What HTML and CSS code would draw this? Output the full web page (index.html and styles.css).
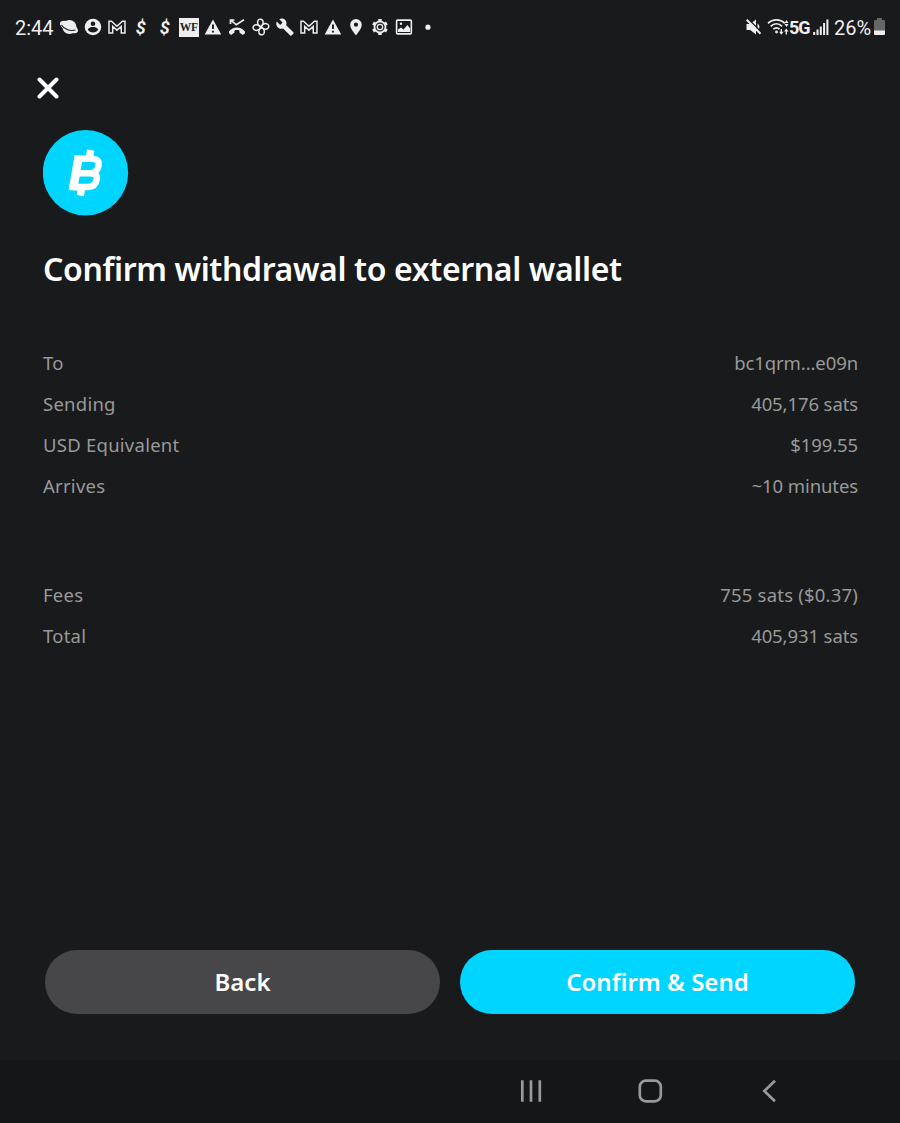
FILE: index.html
```html
<!DOCTYPE html>
<html lang="en">
<head>
    <meta charset="UTF-8">
    <meta name="viewport" content="width=device-width, initial-scale=1.0">
    <title>Confirm withdrawal</title>
    <link rel="stylesheet" href="styles.css">
</head>
<body>
    <div class="status-bar">
        <span class="clock">2:44</span>
        <div class="notifications">
            <svg class="icon" viewBox="0 0 24 24">
                <ellipse cx="12" cy="12" rx="10" ry="4.600" transform="rotate(28 12 12)"/>
                <circle cx="12.500" cy="12" r="7"/>
                <path class="cut" d="M4.500 10c2.500 4 8 6.500 14 5" stroke-width="1.100"/>
            </svg>
            <svg class="icon" viewBox="0 0 24 24">
                <circle cx="12" cy="12" r="8.300"/>
                <circle class="hole" cx="12" cy="8.700" r="2.300"/>
                <path class="hole" d="M6.800 14.500c1.200-2 3.200-2.600 5.200-2.600s4 .6 5.200 2.600c-1.200 2.200-3 3-5.200 3s-4-.8-5.200-3z"/>
            </svg>
            <svg class="icon" viewBox="0 0 24 24">
                <path class="line" d="M4 18V6.300h2.500l5.500 5 5.500-5H20V18h-3.700v-6.500l-4.300 3.700-4.300-3.700V18z" stroke-width="1.500"/>
            </svg>
            <span class="dollar">$</span>
            <span class="dollar">$</span>
            <span class="bank"><b>WF</b></span>
            <svg class="icon" viewBox="0 0 24 24">
                <path d="M12 4.500L20.300 19.500H3.700z"/>
                <path class="cut" d="M12 9.500v4.500M12 15.700v1.900" stroke-width="1.900"/>
            </svg>
            <svg class="icon" viewBox="0 0 24 24">
                <path class="line" d="M5.500 9V5h4M5.800 5.200l5.500 4.600L19 4.800" stroke-width="1.700"/>
                <path d="M4 16.500c4-5.300 12-5.300 16 0v1.700l-2.200 1.900-3.300-2.500v-2.200c-1.600-.6-3.400-.6-5 0v2.200l-3.300 2.500L4 18.200z"/>
            </svg>
            <svg class="icon" viewBox="0 0 24 24">
                <g class="line" stroke-width="1.500">
                    <path d="M12 11.800C9 10.500 8.300 8.500 8.700 6.500c.3-2.200 2.500-2.800 4-2 2.200 1.200 2 4.300-.7 7.300z"/>
                    <path d="M12 11.800C9 10.500 8.300 8.500 8.700 6.500c.3-2.200 2.500-2.800 4-2 2.200 1.200 2 4.300-.7 7.300z" transform="rotate(90 12 12)"/>
                    <path d="M12 11.800C9 10.500 8.300 8.500 8.700 6.500c.3-2.200 2.500-2.800 4-2 2.200 1.200 2 4.300-.7 7.300z" transform="rotate(180 12 12)"/>
                    <path d="M12 11.800C9 10.500 8.300 8.500 8.700 6.500c.3-2.200 2.500-2.800 4-2 2.200 1.200 2 4.300-.7 7.300z" transform="rotate(270 12 12)"/>
                </g>
            </svg>
            <svg class="icon" viewBox="0 0 24 24">
                <path d="M20.400 17.300l-7.200-7.100c.7-1.900.3-3.900-1-5.200-1.700-1.600-4-1.900-5.900-.8l3.300 3.300-2.400 2.400-3.400-3.300c-1 1.900-.6 4.400 1 5.900 1.400 1.400 3.500 1.700 5.300 1l7.200 7.100c.4.400.9.400 1.200 0l1.900-1.800c.4-.4.4-1.100 0-1.500z"/>
            </svg>
            <svg class="icon" viewBox="0 0 24 24">
                <path class="line" d="M4 18V6.300h2.500l5.500 5 5.500-5H20V18h-3.700v-6.500l-4.300 3.700-4.300-3.700V18z" stroke-width="1.500"/>
            </svg>
            <svg class="icon" viewBox="0 0 24 24">
                <path d="M12 4.500L20.300 19.500H3.700z"/>
                <path class="cut" d="M12 9.500v4.500M12 15.700v1.900" stroke-width="1.900"/>
            </svg>
            <svg class="icon" viewBox="0 0 24 24">
                <path d="M12 4a5.800 5.800 0 0 0-5.800 5.800C6.200 14 12 20.300 12 20.300s5.800-6.300 5.800-10.500A5.800 5.800 0 0 0 12 4z"/>
                <circle class="hole" cx="12" cy="9.700" r="2.100"/>
            </svg>
            <svg class="icon" viewBox="0 0 24 24">
                <circle class="line" cx="12" cy="12" r="5.500" stroke-width="1.800"/>
                <circle class="line" cx="12" cy="12" r="2.700" stroke-width="1.300"/>
                <path class="line" d="M12 4v2.500M12 17.500V20M5.100 8l2 1.200M16.900 14.800l2 1.200M5.100 16l2-1.200M16.900 9.200l2-1.200" stroke-width="3.400"/>
            </svg>
            <svg class="icon" viewBox="0 0 24 24">
                <rect class="line" x="4.600" y="5.100" width="14.800" height="13.800" rx="1" stroke-width="1.600"/>
                <path d="M6 17v-2.500l3-2 2.500 2 4-4.500 2.700 3.500V17z"/>
                <circle cx="9" cy="8.800" r="1.200"/>
            </svg>
            <svg class="icon" viewBox="0 0 24 24">
                <circle cx="12" cy="12.200" r="2.600"/>
            </svg>
        </div>
        <div class="system">
            <svg class="mute" viewBox="0 0 18 24">
                <path d="M1.500 9h3.700L11 4.500v15L5.200 15H1.500z"/>
                <path d="M12.500 8.500v7c2.500-1.500 2.500-5.500 0-7z"/>
                <path class="cut" d="M3.500 4.300L17 17.800" stroke-width="1.300"/>
                <path class="line" d="M1.700 4.800L15.500 18.800" stroke-width="2"/>
            </svg>
            <svg class="wifi" viewBox="0 0 22 24">
                <g class="line" stroke-width="1.700">
                    <path d="M1 8.300c4.800-4.700 12-4.700 16.800 0"/>
                    <path d="M3.700 11.300c3.400-3.300 8-3.300 11.400 0"/>
                    <path d="M6.300 14.200c2-1.800 4.300-1.800 6.300 0"/>
                </g>
                <circle cx="9.500" cy="17" r="1.400"/>
                <path d="M19.500 5l2 3h-4zM19.500 12l-2-3h4zM14.300 19.800l-2.300-3h4.600zM19.300 13.500l2.300 3H17z"/>
                <path class="line" d="M14.300 14v4M19.300 15v4.500" stroke-width="1.300"/>
            </svg>
            <b class="network">5G</b>
            <svg class="signal" viewBox="0 0 16 16">
                <path class="line" d="M1.200 16v-3M4.500 16v-5.500M7.800 16V7.500M11.100 16V4M14.400 16V.500" stroke-width="2"/>
            </svg>
            <span class="percent">26%</span>
            <svg class="battery" viewBox="0 0 11 18">
                <path fill="#666" d="M3 0h5v2H3zM1 2h9a1 1 0 0 1 1 1v10H0V3a1 1 0 0 1 1-1z"/>
                <path d="M0 12.500h11V16a1 1 0 0 1-1 1H1a1 1 0 0 1-1-1z"/>
            </svg>
        </div>
    </div>

    <main class="screen">
        <button class="close" aria-label="Close">
            <svg viewBox="0 0 22 22">
                <path d="M2.500 2.500l17 17M19.500 2.500l-17 17"/>
            </svg>
        </button>

        <svg class="coin" viewBox="0 0 86 86">
            <circle cx="42.500" cy="42.700" r="42.700"/>
            <g class="coin-mark">
                <path d="M32.500 28.700H48.500c5.500 0 8 2.300 7.200 6.500-.8 5-4 8-9 8H35M44 43.200h3c5 0 7.500 2 6.700 6.300-.8 5-4 7.500-9 7.500H26.300"/>
                <path d="M35.800 25.700L30 60" stroke-width="8.500"/>
                <path d="M47.700 20l-1.300 7M38.500 59l-1.200 6.700" stroke-width="7.300"/>
            </g>
        </svg>

        <h1 class="title">Confirm withdrawal to external wallet</h1>

        <dl class="details">
            <div class="row"><dt>To</dt><dd>bc1qrm...e09n</dd></div>
            <div class="row"><dt>Sending</dt><dd>405,176 sats</dd></div>
            <div class="row"><dt>USD Equivalent</dt><dd>$199.55</dd></div>
            <div class="row"><dt>Arrives</dt><dd>~10 minutes</dd></div>
        </dl>
        <dl class="details totals">
            <div class="row"><dt>Fees</dt><dd class="fee">755 sats ($0.37)</dd></div>
            <div class="row"><dt>Total</dt><dd>405,931 sats</dd></div>
        </dl>

        <div class="actions">
            <button class="btn btn-back">Back</button>
            <button class="btn btn-send">Confirm &amp; Send</button>
        </div>
    </main>

    <nav class="nav-bar">
        <svg viewBox="0 0 28 28"><path d="M5.300 3.300v21.500M14 3.300v21.500M22.800 3.300v21.500"/></svg>
        <svg viewBox="0 0 28 28"><rect x="3.800" y="3.700" width="21" height="20.600" rx="6"/></svg>
        <svg viewBox="0 0 28 28"><path d="M20 3.700L9.300 14 20 24.300"/></svg>
    </nav>
</body>
</html>
```
FILE: styles.css
```css
:root {
    --background: #191a1c;
    --nav: #151618;
    --accent: #00d5ff;
    --button: #474749;
    --text: #ffffff;
    --text-light: #999999;
    --status: #eeeeee;
}

* {
    margin: 0;
    padding: 0;
    box-sizing: border-box;
}

body {
    display: flex;
    flex-direction: column;
    height: 1123px;
    background-color: var(--background);
    color: var(--text);
    font-family: "Noto Sans", "Open Sans", sans-serif;
}

button {
    border: none;
    background: none;
    color: inherit;
    font-family: inherit;
    cursor: pointer;
}

/* status bar */
.status-bar {
    display: flex;
    align-items: center;
    height: 54px;
    padding: 0 15px;
    color: var(--status);
    font-family: Roboto, sans-serif;
    font-size: 20px;
}

.status-bar svg {
    fill: var(--status);
}

.status-bar .line {
    fill: none;
    stroke: var(--status);
}

.status-bar .cut {
    fill: none;
    stroke: var(--background);
}

.status-bar .hole {
    fill: var(--background);
}

.clock {
    width: 42px;
}

.clock,
.percent {
    padding-top: 1px;
}

.notifications {
    display: flex;
    align-items: center;
}

.icon {
    width: 23.950px;
    height: 24px;
}

.dollar {
    width: 24px;
    text-align: center;
    font-size: 18px;
    font-style: italic;
    font-weight: 700;
}

.bank {
    display: flex;
    align-items: center;
    justify-content: center;
    width: 20px;
    height: 19px;
    margin: 0 2px;
    background-color: var(--status);
    color: #222;
    font-family: "Liberation Serif", serif;
    font-size: 11.500px;
    letter-spacing: -0.3px;
}

.system {
    display: flex;
    align-items: center;
    margin-left: auto;
}

.mute {
    width: 18px;
    height: 24px;
    margin-right: 4px;
}

.wifi {
    width: 22px;
    height: 24px;
}

.network {
    width: 24px;
    font-size: 18px;
    letter-spacing: -1px;
}

.signal {
    width: 16px;
    height: 16px;
    margin-right: 5px;
}

.percent {
    width: 40px;
}

.battery {
    width: 11px;
    height: 18px;
}

/* screen */
.screen {
    display: flex;
    flex: 1;
    flex-direction: column;
    padding: 23px 42px 46px 43px;
}

.close {
    width: 22px;
    height: 22px;
    margin-left: -6px;
}

.close svg {
    display: block;
    fill: none;
    stroke: var(--text);
    stroke-width: 4;
    stroke-linecap: round;
}

.coin {
    width: 86px;
    height: 86px;
    margin-top: 31px;
    fill: var(--accent);
}

.coin-mark {
    fill: none;
    stroke: var(--text);
    stroke-width: 6.500;
}

.title {
    margin-top: 30px;
    font-size: 32px;
    font-weight: 600;
    line-height: 45px;
    letter-spacing: -0.370px;
    white-space: nowrap;
}

.details {
    margin-top: 51px;
    color: var(--text-light);
    font-size: 18.500px;
}

.row {
    display: flex;
    justify-content: space-between;
    height: 41.100px;
    line-height: 41px;
    letter-spacing: 0.250px;
}

.row dd {
    letter-spacing: -0.100px;
}

.row .fee {
    letter-spacing: 0.200px;
}

.totals {
    margin-top: 31px;
    padding-top: 36px;
    border-top: 1px solid #17181a;
}

.actions {
    display: flex;
    gap: 20px;
    margin: auto 3px 0 2px;
}

.btn {
    flex: 1;
    height: 64px;
    padding-bottom: 2px;
    border-radius: 32px;
    font-size: 24px;
    font-weight: 600;
}

.btn-back {
    background-color: var(--button);
}

.btn-send {
    background-color: var(--accent);
}

/* system navigation */
.nav-bar {
    display: flex;
    justify-content: flex-end;
    gap: 91px;
    height: 63px;
    padding: 17px 117px 0 0;
    background-color: var(--nav);
}

.nav-bar svg {
    width: 28px;
    height: 28px;
    fill: none;
    stroke: #999;
    stroke-width: 2.700;
}
```
